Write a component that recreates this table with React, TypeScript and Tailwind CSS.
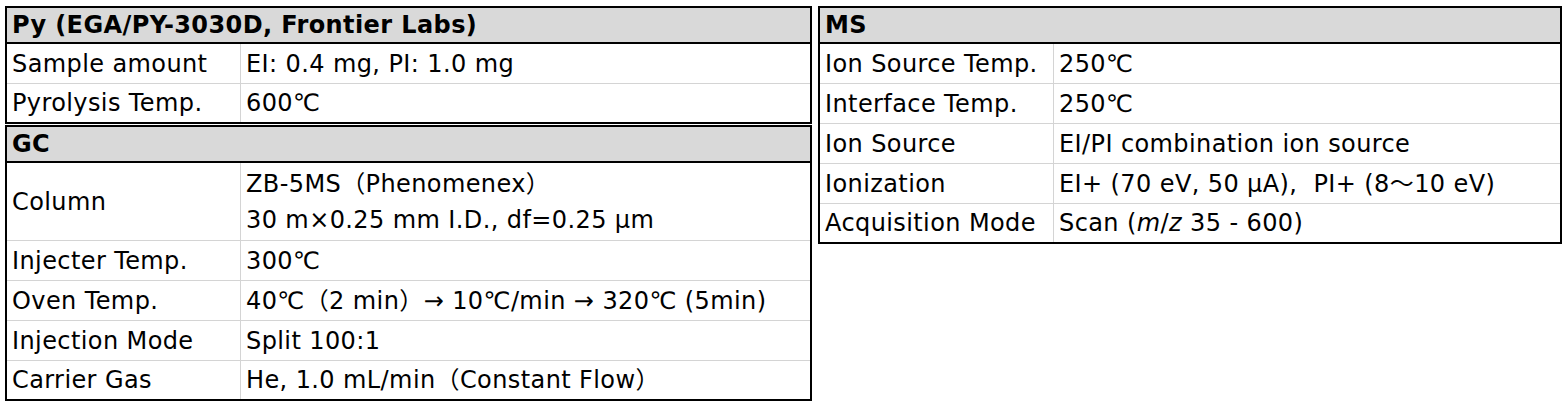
import React from 'react';

type Row = { label: string; value: React.ReactNode; tall?: boolean };

const pyRows: Row[] = [
    { label: 'Sample amount', value: 'EI: 0.4 mg, PI: 1.0 mg' },
    { label: 'Pyrolysis Temp.', value: '600℃' },
];

const gcRows: Row[] = [
    {
        label: 'Column',
        tall: true,
        value: (
            <>
                <div>ZB-5MS（Phenomenex）</div>
                <div>30 m×0.25 mm I.D., df=0.25 μm</div>
            </>
        ),
    },
    { label: 'Injecter Temp.', value: '300℃' },
    { label: 'Oven Temp.', value: '40℃（2 min）→ 10℃/min → 320℃ (5min)' },
    { label: 'Injection Mode', value: 'Split 100:1' },
    { label: 'Carrier Gas', value: 'He, 1.0 mL/min（Constant Flow）' },
];

const msRows: Row[] = [
    { label: 'Ion Source Temp.', value: '250℃' },
    { label: 'Interface Temp.', value: '250℃' },
    { label: 'Ion Source', value: 'EI/PI combination ion source' },
    { label: 'Ionization', value: 'EI+ (70 eV, 50 μA),  PI+ (8～10 eV)' },
    {
        label: 'Acquisition Mode',
        value: (
            <span>
                Scan (<i>m</i>/<i>z</i> 35 - 600)
            </span>
        ),
    },
];

function SpecTable({ title, rows }: { title: string; rows: Row[] }) {
    return (
        <div className="border-2 border-black">
            <div className="h-[36px] bg-[#d9d9d9] border-b-2 border-black px-[5px] flex items-center font-bold">
                {title}
            </div>
            {rows.map((row, i) => {
                const last = i === rows.length - 1;
                const height = row.tall ? 'h-[78px]' : last ? 'h-[38px]' : 'h-[40px]';
                return (
                    <div key={row.label} className={`flex ${height} ${last ? '' : 'border-b border-[#d4d4d4]'}`}>
                        <div className="w-[234px] shrink-0 border-r border-[#d4d4d4] px-[5px] flex items-center whitespace-nowrap">
                            {row.label}
                        </div>
                        <div className="flex-1 px-[5px] flex flex-col justify-center whitespace-pre leading-[36px]">
                            {typeof row.value === 'string' ? <span>{row.value}</span> : row.value}
                        </div>
                    </div>
                );
            })}
        </div>
    );
}

export default function App() {
    return (
        <div
            className="bg-white text-black text-[24px] tracking-[0.4px] flex items-start gap-[6px] pl-[5px] pt-[6px]"
            style={{ fontFamily: '"DejaVu Sans", "Noto Sans CJK JP", sans-serif' }}
        >
            <div className="w-[807px] flex flex-col gap-px">
                <SpecTable title="Py (EGA/PY-3030D, Frontier Labs)" rows={pyRows} />
                <SpecTable title="GC" rows={gcRows} />
            </div>
            <div className="w-[744px]">
                <SpecTable title="MS" rows={msRows} />
            </div>
        </div>
    );
}
